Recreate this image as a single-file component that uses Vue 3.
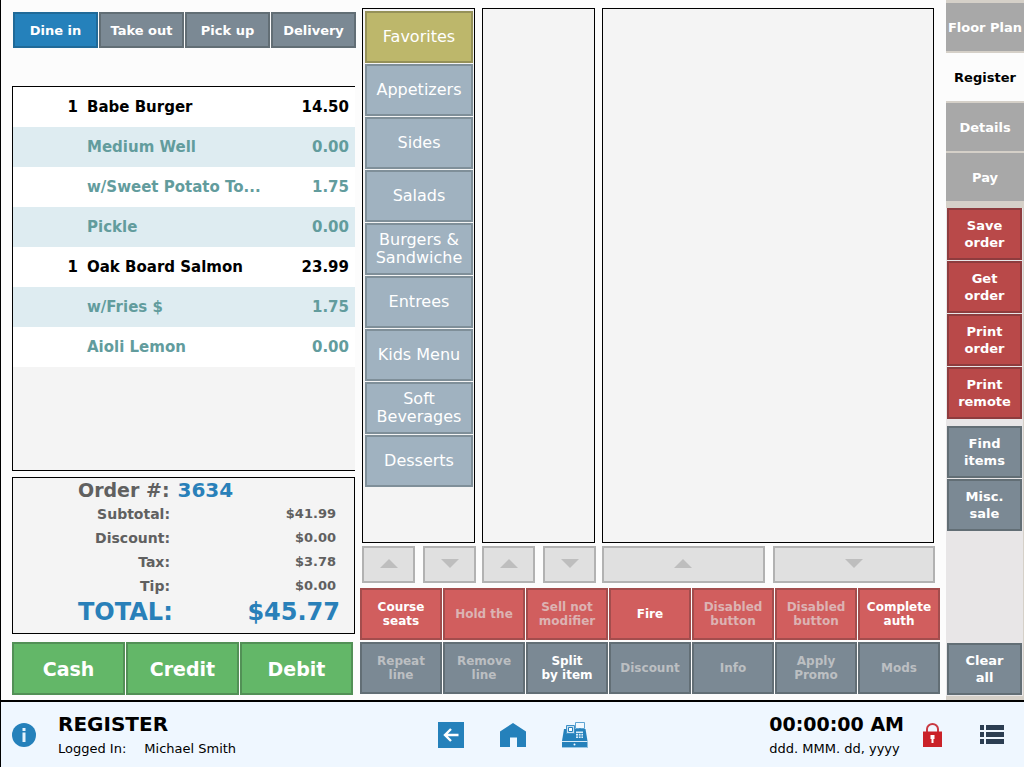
<script setup>
const orderTypes = ['Dine in', 'Take out', 'Pick up', 'Delivery']
const items = [
  { qty: '1', name: 'Babe Burger', price: '14.50' },
  { name: 'Medium Well', price: '0.00' },
  { name: 'w/Sweet Potato To...', price: '1.75' },
  { name: 'Pickle', price: '0.00' },
  { qty: '1', name: 'Oak Board Salmon', price: '23.99' },
  { name: 'w/Fries $', price: '1.75' },
  { name: 'Aioli Lemon', price: '0.00' }
]
const totals = [
  ['Subtotal:', '$41.99'],
  ['Discount:', '$0.00'],
  ['Tax:', '$3.78'],
  ['Tip:', '$0.00']
]
const payments = ['Cash', 'Credit', 'Debit']
const categories = ['Favorites', 'Appetizers', 'Sides', 'Salads', 'Burgers & Sandwiche', 'Entrees', 'Kids Menu', 'Soft Beverages', 'Desserts']
const actions = [
  { label: 'Course\nseats', red: true },
  { label: 'Hold the', red: true, off: true },
  { label: 'Sell not\nmodifier', red: true, off: true },
  { label: 'Fire', red: true },
  { label: 'Disabled\nbutton', red: true, off: true },
  { label: 'Disabled\nbutton', red: true, off: true },
  { label: 'Complete\nauth', red: true },
  { label: 'Repeat\nline', off: true },
  { label: 'Remove\nline', off: true },
  { label: 'Split\nby item' },
  { label: 'Discount', off: true },
  { label: 'Info', off: true },
  { label: 'Apply\nPromo', off: true },
  { label: 'Mods', off: true }
]
const views = ['Floor Plan', 'Register', 'Details', 'Pay']
const orderActions = ['Save\norder', 'Get\norder', 'Print\norder', 'Print\nremote']
const itemActions = ['Find\nitems', 'Misc.\nsale']
</script>

<template>
  <div class="pos">
    <main class="main">
      <section class="ticket">
        <div class="types">
          <button v-for="(t, i) in orderTypes" :key="t" class="btn type" :class="{ active: i === 0 }">{{ t }}</button>
        </div>
        <div class="list">
          <table class="items">
            <tbody>
              <tr v-for="item in items" :key="item.name" :class="{ mod: !item.qty }">
                <td class="qty">{{ item.qty }}</td>
                <td class="name">{{ item.name }}</td>
                <td class="price">{{ item.price }}</td>
              </tr>
            </tbody>
          </table>
        </div>
        <div class="totals">
          <div class="order-no"><span>Order #:</span><strong>3634</strong></div>
          <div v-for="[label, amount] in totals" :key="label" class="sum">
            <span class="sum-label">{{ label }}</span><span class="sum-amount">{{ amount }}</span>
          </div>
          <div class="grand"><span class="grand-label">TOTAL:</span><span class="grand-amount">$45.77</span></div>
        </div>
        <div class="payments">
          <button v-for="p in payments" :key="p" class="btn pay">{{ p }}</button>
        </div>
      </section>

      <section class="center">
        <div class="panels">
          <div class="panel">
            <button v-for="(c, i) in categories" :key="c" class="btn category" :class="{ favorite: i === 0 }">{{ c }}</button>
          </div>
          <div class="panel"></div>
          <div class="panel"></div>
        </div>
        <div class="scrollers">
          <div v-for="n in 3" :key="n" class="scroller">
            <button class="btn arrow" aria-label="Scroll up">
              <svg width="18" height="9" viewBox="0 0 18 9"><path d="M9 0 18 9H0Z" fill="#bebebe" /></svg>
            </button>
            <button class="btn arrow" aria-label="Scroll down">
              <svg width="18" height="9" viewBox="0 0 18 9"><path d="M0 0H18L9 9Z" fill="#bebebe" /></svg>
            </button>
          </div>
        </div>
        <div class="actions">
          <button v-for="(a, i) in actions" :key="i" class="btn action" :class="{ red: a.red }" :disabled="a.off">{{ a.label }}</button>
        </div>
      </section>

      <aside class="side">
        <nav class="views">
          <button v-for="v in views" :key="v" class="view" :class="{ current: v === 'Register' }">{{ v }}</button>
        </nav>
        <div class="group">
          <button v-for="o in orderActions" :key="o" class="btn tool crimson">{{ o }}</button>
        </div>
        <div class="group second">
          <button v-for="o in itemActions" :key="o" class="btn tool">{{ o }}</button>
        </div>
        <div class="group last">
          <button class="btn tool">{{ 'Clear\nall' }}</button>
        </div>
      </aside>
    </main>

    <footer class="footer">
      <div class="session">
        <button class="icon" aria-label="Information">
          <svg width="24" height="24" viewBox="0 0 24 24">
            <circle cx="12" cy="12" r="12" fill="#2581bb" />
            <path d="M10.500 5h3v3h-3zM10.500 9.500h3V19h-3z" fill="#e6f3fd" />
          </svg>
        </button>
        <div class="who">
          <h1>REGISTER</h1>
          <p><span>Logged In:</span><span>Michael Smith</span></p>
        </div>
      </div>
      <div class="shortcuts">
        <button class="icon" aria-label="Back">
          <svg width="26" height="26" viewBox="0 0 26 26">
            <path d="M0 0H26V26H0Z" fill="#2581bb" />
            <path d="M20.500 13H7M13 7 7 13 13 19" fill="none" stroke="#fff" stroke-width="2.400" />
          </svg>
        </button>
        <button class="icon" aria-label="Home">
          <svg width="26" height="26" viewBox="0 0 26 26">
            <path d="M13 1 26 9.500V25H17V15.500H10V25H0V9.500Z" fill="#2581bb" />
          </svg>
        </button>
        <button class="icon" aria-label="Cash register">
          <svg width="26" height="26" viewBox="0 0 26 26">
            <path d="M2 7H23.500L25.500 19V26H0V19Z" fill="#2581bb" />
            <path d="M13.500 .5H22.500V6.500H13.500Z" fill="#f2f9ff" stroke="#5da4d3" />
            <path d="M18 6.500V9" stroke="#2581bb" stroke-width="2" />
            <path d="M4.500 3.500H12.500V11.500H4.500Z" fill="#c6e0f3" stroke="#3f91c7" />
            <path d="M6.500 5.500H10.500V9.500H6.500Z" fill="#fff" stroke="#2581bb" />
            <path d="M14 9.500H21V16H14Z" fill="#dceefa" />
            <path d="M14 11.500H21M14 14H21M16.500 11V16M19 11V16" stroke="#2581bb" stroke-width=".8" />
            <path d="M0 19.500H25.500" stroke="#d7ebf8" />
            <path d="M0 25.500H25.500" stroke="#9bc8e4" />
            <circle cx="12.500" cy="22.500" r="1" fill="#fff" />
          </svg>
        </button>
      </div>
      <div class="status">
        <div class="clock">
          <time>00:00:00 AM</time>
          <p>ddd. MMM. dd, yyyy</p>
        </div>
        <button class="icon" aria-label="Lock">
          <svg width="19" height="24" viewBox="0 0 19 24">
            <path d="M4 9V6a5.500 5 0 0 1 11 0V9" fill="none" stroke="#c93a43" stroke-width="2" />
            <path d="M0 8.500H19V24H0Z" fill="#ca2229" />
            <path d="M7.500 12H11.500V16H10.500V20H8.500V16H7.500Z" fill="#fff" />
          </svg>
        </button>
        <button class="icon menu" aria-label="Menu">
          <svg width="24" height="19" viewBox="0 0 24 19">
            <path d="M0 0H4V5H0ZM6 0H24V5H6ZM0 7H4V12H0ZM6 7H24V12H6ZM0 14H4V19H0ZM6 14H24V19H6Z" fill="#2c3e52" />
          </svg>
        </button>
      </div>
    </footer>
  </div>
</template>

<style>
body {
  margin: 0;
}
</style>

<style scoped>
.pos {
  display: flex;
  flex-direction: column;
  box-sizing: border-box;
  min-height: 100vh;
  border-left: 1px solid #000;
  background: #fcfcfc;
  color: #000;
  font-family: "DejaVu Sans", Verdana, sans-serif;
}
button {
  margin: 0;
  padding: 0;
  border: 0;
  font-family: inherit;
  color: #fff;
}
.btn {
  box-sizing: border-box;
  min-width: 0;
  border: 2px solid #626e75;
  background: #7b8994;
  font-weight: bold;
  white-space: pre-line;
}
.main {
  flex: 1;
  display: grid;
  grid-template-columns: 348fr 586fr 78px;
  padding-left: 11px;
}
.ticket {
  display: flex;
  flex-direction: column;
  margin-right: 5px;
  padding: 12px 0 5px;
}
.types {
  display: grid;
  grid-template-columns: repeat(4, 1fr);
  gap: 1px;
  margin: 0 -1px 38px 1px;
}
.type {
  height: 36px;
  font-size: 13px;
}
.type.active {
  background: #2581bb;
  border-color: #206a98;
}
.list {
  flex: 1;
  border: 1px solid #000;
  border-right: 0;
  background: #f4f4f4;
}
.items {
  width: 100%;
  border-collapse: collapse;
  font-size: 15px;
  font-weight: bold;
}
.items tr {
  height: 40px;
  background: #fff;
}
.items tr:nth-child(even) {
  background: #deecf1;
}
.items td {
  padding: 0;
}
.mod {
  color: #629c9d;
}
.items .qty {
  width: 65px;
  text-align: right;
}
.items .name {
  padding-left: 9px;
}
.items .price {
  padding-right: 6px;
  text-align: right;
}
.totals {
  box-sizing: border-box;
  height: 157px;
  margin: 6px 0 8px;
  border: 1px solid #000;
  background: #f4f4f4;
  color: #606060;
  font-weight: bold;
}
.order-no {
  display: flex;
  gap: 8px;
  padding-left: 65px;
  font-size: 19px;
  line-height: 24px;
}
.order-no strong {
  color: #2980b9;
  font-size: 20px;
}
.sum {
  display: flex;
  line-height: 24px;
}
.sum-label {
  width: 157px;
  text-align: right;
  font-size: 14px;
}
.sum-amount {
  flex: 1;
  padding-right: 18px;
  text-align: right;
  font-size: 13px;
}
.grand {
  display: flex;
  justify-content: space-between;
  padding: 0 14px 0 65px;
  color: #2980b9;
  font-size: 24px;
  line-height: 28px;
}
.payments {
  display: grid;
  grid-template-columns: repeat(3, 1fr);
  gap: 1px;
  margin-right: 2px;
}
.pay {
  height: 53px;
  background: #63b768;
  border-color: #529056;
  font-size: 19px;
}
.center {
  display: flex;
  flex-direction: column;
  margin-right: 6px;
  padding: 8px 0 6px;
}
.panels,
.scrollers {
  display: grid;
  grid-template-columns: 114fr 114fr 333fr;
  gap: 6px;
  margin: 0 5px 0 2px;
}
.panels {
  flex: 1;
}
.panel {
  display: flex;
  flex-direction: column;
  gap: 1px;
  min-width: 0;
  margin-right: 1px;
  padding: 2px 1px 2px 2px;
  border: 1px solid #000;
  background: #f4f4f4;
}
.category {
  height: 52px;
  background: #a0b2c0;
  border-color: #7f8f99;
  font-size: 16px;
  font-weight: normal;
  line-height: 18px;
}
.category.favorite {
  background: #bdb76b;
  border-color: #959158;
}
.scrollers {
  margin-top: 3px;
  margin-bottom: 5px;
}
.scroller {
  display: grid;
  grid-template-columns: 1fr 1fr;
  gap: 8px;
}
.arrow {
  display: flex;
  align-items: center;
  justify-content: center;
  height: 37px;
  padding-bottom: 2px;
  background: #e0e0e0;
  border-color: #b2b2b2;
}
.actions {
  display: grid;
  grid-template-columns: repeat(7, 1fr);
  gap: 2px 1px;
}
.action {
  height: 52px;
  font-size: 12px;
  line-height: 14px;
}
.action.red {
  background: #d15e5e;
  border-color: #a34d4d;
}
.action:disabled {
  color: #bcbfc2;
}
.action.red:disabled {
  color: #dcb3b3;
}
.side {
  display: flex;
  flex-direction: column;
  box-sizing: border-box;
  background: #e8e6e7;
}
.views {
  display: flex;
  flex-direction: column;
  gap: 2px;
  padding: 3px 0 7px;
  background: #d5d0c8;
}
.view {
  height: 48px;
  background: #a8a8a8;
  font-size: 13px;
  font-weight: bold;
  white-space: nowrap;
}
.view.current {
  background: #fcfcfc;
  color: #000;
}
.group {
  display: flex;
  flex-direction: column;
  gap: 1px;
  padding: 0 1px;
  border-right: 1px solid #d5d0c8;
}
.group.second {
  flex: 1;
  padding-top: 7px;
}
.group.last {
  padding-bottom: 1px;
  border-bottom: 4px solid #d5d0c8;
}
.tool {
  height: 52px;
  font-size: 13px;
  line-height: 17px;
}
.tool.crimson {
  background: #b94949;
  border-color: #8e3c3e;
}
.footer {
  display: grid;
  grid-template-columns: 1fr auto 1fr;
  align-items: center;
  box-sizing: border-box;
  height: 67px;
  border-top: 2px solid #000;
  background: #eff7ff;
}
.footer h1,
.footer p {
  margin: 0;
}
.icon {
  display: flex;
  background: none;
}
.session,
.shortcuts,
.status {
  display: flex;
  align-items: center;
}
.session {
  padding-left: 11px;
}
.who {
  margin-left: 22px;
}
.who h1 {
  font-size: 20px;
  line-height: 28px;
}
.who p {
  display: flex;
  gap: 18px;
  font-size: 13px;
  line-height: 22px;
}
.shortcuts {
  gap: 36px;
}
.status {
  justify-content: flex-end;
  padding-right: 20px;
}
.clock {
  margin-right: 19px;
}
.clock time {
  display: block;
  font-size: 19px;
  font-weight: bold;
  line-height: 28px;
}
.clock p {
  font-size: 13px;
  line-height: 22px;
}
.menu {
  margin-left: 38px;
}
</style>
